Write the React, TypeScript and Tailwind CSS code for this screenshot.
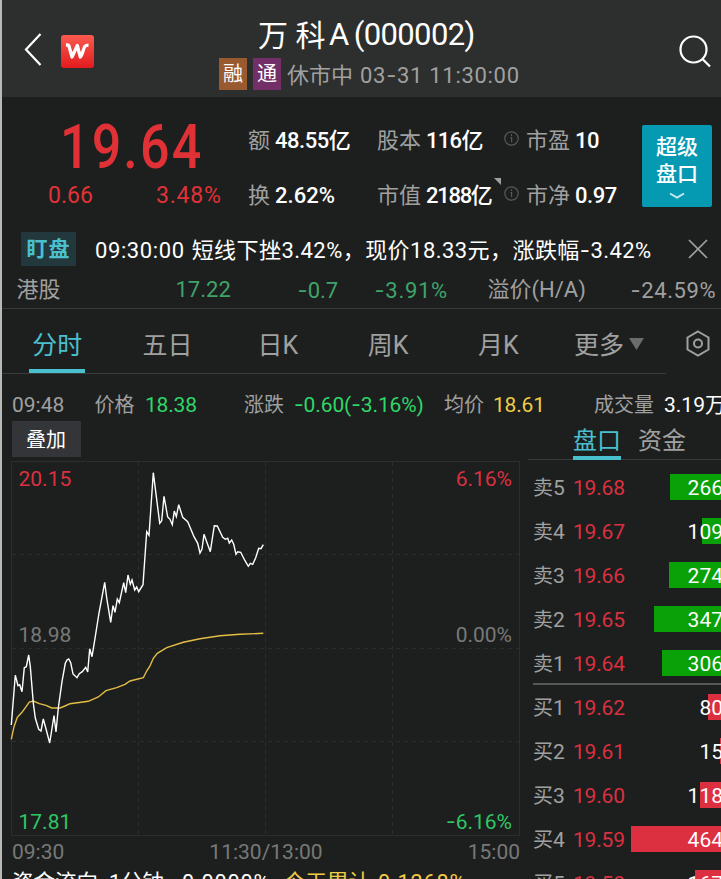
import { Fragment } from "react";
import { clsx } from "clsx";

interface OrderRow {
  label: string;
  price: string;
  volume: string;
  bar: number;
}

const tabs = ["分时", "五日", "日K", "周K", "月K"];

const sells: OrderRow[] = [
  { label: "卖5", price: "19.68", volume: "266", bar: 51 },
  { label: "卖4", price: "19.67", volume: "109", bar: 19 },
  { label: "卖3", price: "19.66", volume: "274", bar: 52 },
  { label: "卖2", price: "19.65", volume: "347", bar: 67 },
  { label: "卖1", price: "19.64", volume: "306", bar: 59 },
];

const buys: OrderRow[] = [
  { label: "买1", price: "19.62", volume: "80", bar: 13 },
  { label: "买2", price: "19.61", volume: "15", bar: 1 },
  { label: "买3", price: "19.60", volume: "118", bar: 21 },
  { label: "买4", price: "19.59", volume: "464", bar: 90 },
  { label: "买5", price: "19.58", volume: "167", bar: 26 },
];

const priceLine =
  "11.3,725 15.3,675.3 18,685.7 19.7,684.7 22,691.7 24.3,667.7 26.3,666.7 28.7,655 30.3,666.7 33.3,703 35.3,718 38.7,729.3 41,731 43.3,719 45.7,727.7 49.7,743 54,715.7 56,732 58.3,708 62,681.7 65.3,663.3 67,660 68.7,659 70.7,662.7 73,674 77,677.7 79.3,673.7 82.3,671.7 85.7,667.3 87.7,672 89.7,648.7 92,656.7 95,638.3 99,613 104.7,582.3 106.7,598 110.7,622.3 113,605.7 115,612.3 117.3,599 119.3,602.7 123.7,582.7 125.7,592.7 128,575 130.3,584.3 132,580 134.7,590 136.7,587 138.7,591.7 143,584.7 146.7,531.7 149,535.3 153.3,472.7 159.7,523.3 161.7,520.7 164,496.3 167.7,517 170,519.3 172.3,524.7 174.3,511 176.3,516.7 178.7,504.7 182.7,517.3 187.7,521.7 194,536.7 197.7,543.3 200,553 202,549 204,534.3 210.3,551.7 214.3,525.7 217.3,526 222.7,537.3 225.3,539.3 227.7,538.3 229.3,543 231.7,540 233.7,544.3 236,554.3 237.7,551.7 240.7,552.3 245,560.7 248.3,566.3 250.3,563.3 252.7,564.3 255.7,557.7 258.7,548.3 261,548.7 263.3,544.7";

const averageLine =
  "11.3,739.3 14,726.7 17.3,717.3 22,712.3 29.3,702 33.3,701 39.3,703.7 46,705.3 51.7,708 60,708 65,706 70,703.7 88.3,701.3 98.3,697 106,690.7 116.7,687.7 125,684.3 130,681 143.3,677.7 146.7,671 150,666 153.3,658.3 157.3,653.3 166.7,647.7 183.3,642.3 200,638.7 220,635.7 240,634.3 263.3,633.3";

// Roboto's hyphen is too short next to the digits, Inter has a wide one
function Num({ children }: { children: string }) {
  return (
    <>
      {children.split("-").map((part, i) => (
        <Fragment key={i}>
          {i > 0 && <span className="font-['Inter']">-</span>}
          {part}
        </Fragment>
      ))}
    </>
  );
}

function Header() {
  return (
    <header className="flex h-[97px] bg-[#2d2f2e] text-white">
      <div className="flex w-[217px] items-center pt-1.5">
        <svg width="20" height="34" viewBox="0 0 20 34" className="mb-[3px] ml-[20px]" fill="none" stroke="#fff" strokeWidth="2.2">
          <path d="M18.500 1 4 16.500 18.500 32" />
        </svg>
        <svg width="33" height="33" viewBox="0 0 33 33" className="ml-[19px]">
          <defs>
            <linearGradient id="logo" x1="0" y1="0" x2="0" y2="1">
              <stop offset="0" stopColor="#fb5a4f" />
              <stop offset="1" stopColor="#e21b1f" />
            </linearGradient>
          </defs>
          <rect width="33" height="33" rx="3" fill="url(#logo)" />
          <path
            d="M5 10h1.500c.8 0 1.200.3 1.500 1l3 11 5.300-11.500 3 11.500c2.700-2.500 2.500-8 4.700-10.700.8-1 1.700-1.200 3.500-1.200"
            fill="none"
            stroke="#fff"
            strokeWidth="3.300"
            strokeLinejoin="round"
          />
        </svg>
      </div>
      <div className="flex w-[310px] flex-col">
        <h1 className="mt-[15px] flex h-[40px] items-center pl-[39px] text-[30px] whitespace-pre">
          <span className="w-[71px]">万 科</span>
          <span className="text-[31px] tracking-[-0.6px]">
            A<span className="ml-[5px]">(000002)</span>
          </span>
        </h1>
        <div className="mt-[2px] flex h-[34px] items-center text-[22px] text-[#a0a0a0]">
          <span className="flex h-8 w-7 items-center justify-center bg-[#9a5a30] text-[20px] text-white">融</span>
          <span className="ml-1.5 flex h-8 w-7 items-center justify-center bg-[#732f68] text-[20px] text-white">通</span>
          <span className="ml-1.5 w-[73px] pt-[2px]">休市中</span>
          <span className="pt-[2px] text-[22px] tracking-[0.7px] whitespace-nowrap">
            <Num>03-31 11:30:00</Num>
          </span>
        </div>
      </div>
      <svg width="34" height="34" viewBox="0 0 34 34" className="mt-[34px] ml-[149px]" fill="none" stroke="#fff" strokeWidth="2.2">
        <circle cx="15.500" cy="15.500" r="13" />
        <path d="m24.500 25 7.500 7.500" />
      </svg>
    </header>
  );
}

function InfoIcon() {
  return (
    <svg width="15" height="15" viewBox="0 0 15 15" className="mb-1 shrink-0" fill="none" stroke="#565857" strokeWidth="1.2">
      <circle cx="7.500" cy="7.500" r="6.700" />
      <path d="M7.500 3.300v1.600M6.300 6.500h1.300v4.700" />
    </svg>
  );
}

interface StatProps {
  label: string;
  value: string;
  className?: string;
}

function Stat({ label, value, className = "tracking-[-0.5px]" }: StatProps) {
  return (
    <div className="flex items-center gap-[5px] whitespace-nowrap">
      <span className="text-[22px] text-[#a0a0a0]">{label}</span>
      <span className={clsx("text-[22px] font-medium text-white", className)}>{value}</span>
    </div>
  );
}

function Quote() {
  return (
    <section className="flex h-[135px]">
      <div className="w-[245px] text-[#e03236]">
        <div className="h-[81px] origin-left scale-x-[0.84] pt-[17px] pl-[69px] text-[62px] leading-[66px] font-medium tracking-[2.5px]">
          19.64
        </div>
        <div className="flex pl-[46px] text-[23px] leading-9">
          <span className="w-[108px]">0.66</span>
          <span className="tracking-[0.8px]">3.48%</span>
        </div>
      </div>
      <div className="grid h-[110px] w-[395px] grid-cols-[129px_126px_1fr] grid-rows-[55px_55px] items-center pt-4 pl-px">
        <Stat label="额" value="48.55亿" />
        <Stat label="股本" value="116亿" className="tracking-[-0.7px]" />
        <div className="flex items-center gap-[7px] pl-px">
          <InfoIcon />
          <Stat label="市盈" value="10" />
        </div>
        <Stat label="换" value="2.62%" className="tracking-normal" />
        <div className="flex">
          <Stat label="市值" value="2188亿" className="tracking-[-1.3px]" />
          <svg width="7" height="7" viewBox="0 0 7 7" className="ml-[2px] shrink-0 -translate-y-px">
            <path d="M0 0h7v7z" fill="#a0a0a0" />
          </svg>
        </div>
        <div className="flex items-center gap-[7px] pl-px">
          <InfoIcon />
          <Stat label="市净" value="0.97" className="tracking-[-0.5px]" />
        </div>
      </div>
      <button className="mt-[28px] flex h-[82px] w-[70px] flex-col items-center rounded-[2px] bg-[#0699b2] pt-[9px] text-[21px] leading-[27px] font-medium text-white">
        <span>超级</span>
        <span>盘口</span>
        <svg width="16" height="8" viewBox="0 0 16 8" className="mt-1" fill="none" stroke="#c5e9ef" strokeWidth="2">
          <path d="m1 1.500 7 4 7-4" />
        </svg>
      </button>
    </section>
  );
}

function Notice() {
  return (
    <section className="flex h-[34px] items-center">
      <span className="ml-[19px] flex h-[34px] w-[55px] items-center justify-center bg-[#22383d] pt-px text-[21px] font-bold tracking-[1px] text-[#4ac0cf]">
        盯盘
      </span>
      <span className="ml-[19px] w-[593px] pt-[3px] text-[22px] tracking-[0.45px] whitespace-nowrap text-white">
        <span className="mr-[7px] tracking-[0.6px]">09:30:00</span>
        <Num>短线下挫3.42%，现价18.33元，涨跌幅-3.42%</Num>
      </span>
      <svg width="20" height="20" viewBox="0 0 20 20" fill="none" stroke="#a0a0a0" strokeWidth="1.700">
        <path d="m1 1 18 18M19 1 1 19" />
      </svg>
    </section>
  );
}

function HkRow() {
  return (
    <section className="grid h-[43px] grid-cols-[159px_122px_77px_113px_143px_1fr] border-b border-[#3a3c3b] pt-1 pl-[14.5px] text-[22px] leading-10 whitespace-nowrap text-[#a0a0a0]">
      <span>港股</span>
      <span className="text-[#3fa36a]">17.22</span>
      <span className="text-[#3fa36a]">
        <Num>-0.7</Num>
      </span>
      <span className="tracking-[0.7px] text-[#3fa36a]">
        <Num>-3.91%</Num>
      </span>
      <span>溢价(H/A)</span>
      <span className="tracking-[0.6px]">
        <Num>-24.59%</Num>
      </span>
    </section>
  );
}

function Tabs() {
  return (
    <nav className="flex h-[65px] text-[25px] text-[#a0a0a0]">
      <div className="flex w-[664px] border-b border-[#3a3c3b]">
        {tabs.map((tab, i) => (
          <div key={tab} className="flex w-[110.3px] justify-center">
            <span
              className={clsx(
                "h-[64px] px-[3px] pt-[8px] leading-[57px]",
                i === 0 && "border-b-4 border-[#4ac0cf] text-[#4ac0cf]"
              )}
            >
              {tab}
            </span>
          </div>
        ))}
        <div className="flex items-center gap-[5px] pl-[20.5px] leading-[57px] whitespace-nowrap">
          <span className="pt-[8px]">更多</span>
          <svg width="15" height="12" viewBox="0 0 15 12" className="mt-1.5">
            <path d="M0 0h15L7.500 12z" fill="#6b6d6c" />
          </svg>
        </div>
      </div>
      <svg width="24" height="27" viewBox="0 0 24 27" className="mt-[21px] ml-5" fill="none" stroke="#a0a0a0" strokeWidth="2">
        <path d="M12 1.500 22.500 7.500v12L12 25.500 1.500 19.500v-12z" />
        <circle cx="12" cy="13.500" r="4" />
      </svg>
    </nav>
  );
}

function PriceInfo() {
  return (
    <section className="grid h-[47px] grid-cols-[82.5px_50.5px_99px_50px_150px_49px_101px_70px_80px] pt-[15px] pl-[10px] text-[20px] leading-8 whitespace-nowrap text-[#a0a0a0]">
      <span className="text-[21px]">09:48</span>
      <span>价格</span>
      <span className="text-[21px] tracking-[-0.2px] text-[#2fd768]">18.38</span>
      <span>涨跌</span>
      <span className="text-[21px] tracking-[-0.1px] text-[#2fd768]">
        <Num>-0.60(-3.16%)</Num>
      </span>
      <span>均价</span>
      <span className="text-[21px] tracking-[-0.2px] text-[#f0cc46]">18.61</span>
      <span>成交量</span>
      <span className="text-[21px] text-white">3.19万</span>
    </section>
  );
}

function Dash() {
  return <tspan fontFamily="Inter">-</tspan>;
}

function Chart() {
  return (
    <svg width="518" height="379" viewBox="2 459 518 379" className="block" fontSize="21">
      <g fill="none" stroke="#2c2e2d" strokeWidth="1">
        <rect x="11.500" y="461.500" width="508" height="374" />
        <path d="M138.500 462v373M265.500 462v373M392.500 462v373M12 554.500h507M12 648.500h507M12 741.500h507" strokeDasharray="4 4" />
      </g>
      <polyline points={averageLine} fill="none" stroke="#e3bd45" strokeWidth="1.400" />
      <polyline points={priceLine} fill="none" stroke="#fff" strokeWidth="1.400" />
      <text x="18.500" y="486" fill="#da3040">20.15</text>
      <text x="18.500" y="642" fill="#777978">18.98</text>
      <text x="18.500" y="828.500" fill="#2fc765">17.81</text>
      <g textAnchor="end">
        <text x="512" y="486" fill="#da3040">6.16%</text>
        <text x="512" y="642" fill="#777978">0.00%</text>
        <text x="512" y="828.500" fill="#2fc765">
          <Dash />
          6.16%
        </text>
      </g>
    </svg>
  );
}

interface OrderLineProps {
  row: OrderRow;
  barClass: string;
}

function OrderLine({ row, barClass }: OrderLineProps) {
  return (
    <div className="flex h-11 items-center text-[21px] whitespace-nowrap">
      <span className="w-10 pt-[3px] text-[#a0a0a0]">
        <span className="text-[20px]">{row.label[0]}</span>
        {row.label[1]}
      </span>
      <span className="w-[58px] pt-[3px] tracking-[-0.2px] text-[#da3040]">{row.price}</span>
      <div className="relative flex h-[26px] w-[90px] items-center justify-end">
        <div className={clsx("absolute inset-y-0 right-0", barClass)} style={{ width: row.bar }} />
        <span className="relative -mr-[2px] pt-[3px] text-white">{row.volume}</span>
      </div>
    </div>
  );
}

function OrderBook() {
  return (
    <aside className="ml-[8px] w-[193px]">
      <div className="flex h-[39px] gap-[17px] border-b border-[#3a3c3b] pl-[45px] text-[24px] leading-[40px]">
        <span className="h-[39px] border-b-4 border-[#4ac0cf] text-[#4ac0cf]">盘口</span>
        <span className="text-[#a0a0a0]">资金</span>
      </div>
      <div className="pt-[5px] pl-[5px]">
        {sells.map((row) => (
          <OrderLine key={row.label} row={row} barClass="bg-[#09a008]" />
        ))}
        <div className="-mt-[2px] h-[2px] bg-[#565857]" />
        {buys.map((row) => (
          <OrderLine key={row.label} row={row} barClass="bg-[#dc2f40]" />
        ))}
      </div>
    </aside>
  );
}

export default function App() {
  return (
    <main className="h-[879px] w-[721px] overflow-hidden border-l-2 border-[#b8bab9] bg-[#1d1f1e] font-['Roboto','Noto_Sans_CJK_SC',sans-serif]">
      <Header />
      <Quote />
      <Notice />
      <HkRow />
      <Tabs />
      <PriceInfo />
      <div className="flex">
        <div className="w-[518px]">
          <button className="ml-[10px] block h-9 w-[69px] bg-[#343538] pt-[2px] pr-px text-[20px] text-white">叠加</button>
          <div className="pt-[2px]">
            <Chart />
          </div>
          <div className="flex h-[29px] justify-between pl-[10px] text-[21px] leading-[29px] text-[#777978]">
            <span>09:30</span>
            <span>11:30/13:00</span>
            <span>15:00</span>
          </div>
          <div className="flex pl-[10px] text-[21.500px] leading-8 whitespace-nowrap text-white">
            <span className="w-[97px]">资金流向</span>
            <span className="w-[73px]">1分钟</span>
            <span className="w-[102px] tracking-[0.9px]">0.0000%</span>
            <span className="w-[94px] text-[#f0cc46]">今天累计</span>
            <span className="tracking-[0.9px] text-[#f0cc46]">0.1268%</span>
          </div>
        </div>
        <OrderBook />
      </div>
    </main>
  );
}
